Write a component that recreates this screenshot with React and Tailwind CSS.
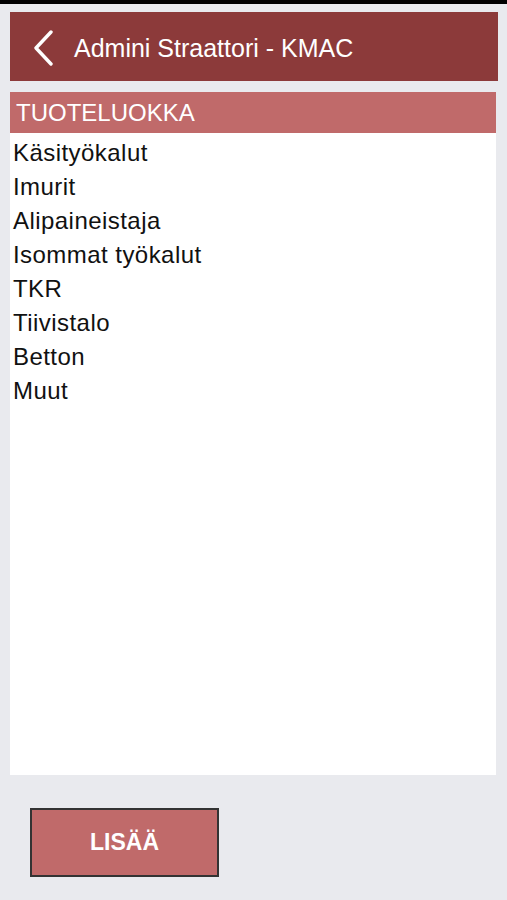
export default function App() {
  const items = [
    'Käsityökalut',
    'Imurit',
    'Alipaineistaja',
    'Isommat työkalut',
    'TKR',
    'Tiivistalo',
    'Betton',
    'Muut',
  ];

  return (
    <div className="w-full h-[900px] bg-[#e9eaee] flex flex-col font-['Liberation_Sans',Arial,sans-serif] overflow-hidden">
      {/* status strip */}
      <div className="h-1 bg-black" />

      {/* title bar */}
      <div className="mt-2 ml-[10px] mr-[9px] h-[69px] bg-[#8c3a3a] flex items-center">
        <svg width="22" height="36" viewBox="0 0 22 36" className="ml-[22px] mt-[2px]" fill="none">
          <polyline points="19,2 4,18 19,34" stroke="white" strokeWidth="3.4" strokeLinecap="round" strokeLinejoin="round" />
        </svg>
        <span className="ml-[20px] pt-1 text-[25px] text-white leading-none">Admini Straattori - KMAC</span>
      </div>

      {/* list panel */}
      <div className="mt-[11px] ml-[10px] mr-[11px] flex flex-col">
        <div className="h-[41px] bg-[#c06a6a] flex items-center pl-[6px] text-[24px] text-white">TUOTELUOKKA</div>
        <div className="h-[642px] bg-white pt-[3px] pl-[3px]">
          {items.map((item) => (
            <div key={item} className="h-[34px] leading-[34px] text-[24px] tracking-[0.45px] text-[#111]">
              {item}
            </div>
          ))}
        </div>
      </div>

      <div className="mt-[33px] ml-[30px]">
        <button className="w-[189px] h-[69px] bg-[#c06a6a] border-2 border-[#333] flex items-center justify-center text-white text-[23px] font-bold">
          LISÄÄ
        </button>
      </div>
    </div>
  );
}
